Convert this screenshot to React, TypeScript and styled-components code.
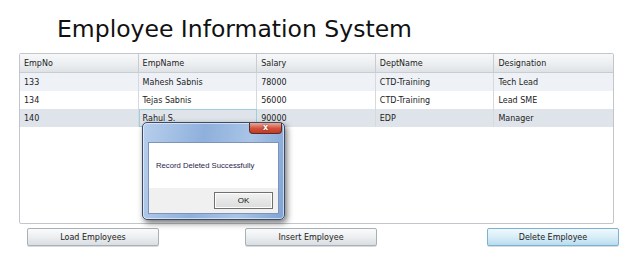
import React from "react";
import styled, { createGlobalStyle, css } from "styled-components";

const GlobalStyle = createGlobalStyle`
  html, body {
    margin: 0;
    padding: 0;
    background: #ffffff;
  }
  body {
    font-family: "DejaVu Sans", Verdana, sans-serif;
    color: #1a1a1a;
  }
`;

interface Employee {
  empNo: number;
  name: string;
  salary: number;
  dept: string;
  designation: string;
}

const employees: Employee[] = [
  { empNo: 133, name: "Mahesh Sabnis", salary: 78000, dept: "CTD-Training", designation: "Tech Lead" },
  { empNo: 134, name: "Tejas Sabnis", salary: 56000, dept: "CTD-Training", designation: "Lead SME" },
  { empNo: 140, name: "Rahul S.", salary: 90000, dept: "EDP", designation: "Manager" },
];

const columns = ["EmpNo", "EmpName", "Salary", "DeptName", "Designation"];

export default function App() {
  return (
    <>
      <GlobalStyle />
      <Page>
        <Title>Employee Information System</Title>
        <Grid>
          <HeaderRow>
            {columns.map((c) => (
              <HeaderCell key={c}>{c}</HeaderCell>
            ))}
          </HeaderRow>
          {employees.map((e, i) => (
            <Row key={e.empNo} tone={i === 0 ? "alt" : i === 2 ? "selected" : "plain"}>
              <Cell>{e.empNo}</Cell>
              <Cell focused={i === 2}>{e.name}</Cell>
              <Cell>{e.salary}</Cell>
              <Cell>{e.dept}</Cell>
              <Cell>{e.designation}</Cell>
            </Row>
          ))}
        </Grid>
        <Toolbar>
          <Button>Load Employees</Button>
          <Button offset={86}>Insert Employee</Button>
          <Button offset={110} active>
            Delete Employee
          </Button>
        </Toolbar>

        <Dialog>
          <TitleBar>
            <CloseButton>x</CloseButton>
          </TitleBar>
          <DialogBody>
            <Message>Record Deleted Successfully</Message>
            <DialogFooter>
              <OkButton>OK</OkButton>
            </DialogFooter>
          </DialogBody>
        </Dialog>
      </Page>
    </>
  );
}

const Page = styled.div`
  position: relative;
  width: 628px;
  height: 259px;
  overflow: hidden;
`;

const Title = styled.h1`
  margin: 0;
  padding: 15px 0 0 57px;
  font-size: 23.5px;
  line-height: 28px;
  font-weight: normal;
  color: #111;
`;

const Grid = styled.div`
  margin: 10px 0 0 19px;
  width: 593px;
  height: 169px;
  border: 1px solid #c2c6cb;
  border-radius: 2px;
  box-sizing: content-box;
  font-size: 8px;
`;

const HeaderRow = styled.div`
  display: grid;
  grid-template-columns: repeat(5, 1fr);
  height: 18px;
  background: linear-gradient(#f7f8f9, #eceef0 55%, #dfe2e5);
  border-bottom: 1px solid #c9cdd2;
`;

const HeaderCell = styled.div`
  display: flex;
  align-items: center;
  padding-left: 4px;
  border-right: 1px solid #c9cdd2;
  color: #222;

  &:last-child {
    border-right: none;
  }
`;

const rowTones = {
  alt: "#eef2f6",
  plain: "#ffffff",
  selected: "#dfe4ea",
};

const Row = styled.div<{ tone: keyof typeof rowTones }>`
  display: grid;
  grid-template-columns: repeat(5, 1fr);
  height: 18px;
  background: ${({ tone }) => rowTones[tone]};
`;

const Cell = styled.div<{ focused?: boolean }>`
  display: flex;
  align-items: center;
  padding-left: 4px;
  border-right: 1px solid #d6dade;
  color: #222;
  box-sizing: border-box;

  &:last-child {
    border-right: none;
  }

  ${({ focused }) =>
    focused &&
    css`
      border: 1px solid #9dd0de;
      padding-left: 3px;
    `}
`;

const Toolbar = styled.div`
  display: flex;
  margin: 4px 0 0 27px;
`;

const Button = styled.button<{ active?: boolean; offset?: number }>`
  width: 132px;
  height: 18px;
  margin-left: ${({ offset }) => offset ?? 0}px;
  padding: 0;
  font-family: "DejaVu Sans", Verdana, sans-serif;
  font-size: 8px;
  color: #222;
  border: 1px solid #a8b0b8;
  border-radius: 2px;
  background: linear-gradient(#fafbfc, #eceef0 50%, #dadee2);
  box-shadow: 0 1px 0 #d8dbde;

  ${({ active }) =>
    active &&
    css`
      border-color: #78b4d0;
      background: linear-gradient(#f0f8fd, #d8edf8 50%, #b9dcef);
    `}
`;

const Dialog = styled.div`
  position: absolute;
  left: 142px;
  top: 122px;
  width: 143px;
  height: 98px;
  box-sizing: border-box;
  border: 1px solid #3a4a66;
  border-radius: 5px;
  padding: 0 5px 5px;
  display: flex;
  flex-direction: column;
  background: linear-gradient(100deg, #b8cfec, #8fb0dc 40%, #a9c4e6 70%, #7fa3d4);
  box-shadow: 2px 3px 6px rgba(0, 0, 0, 0.55), inset 0 0 0 1px rgba(255, 255, 255, 0.55);
`;

const TitleBar = styled.div`
  height: 19px;
  display: flex;
  justify-content: flex-end;
  align-items: flex-start;
`;

const CloseButton = styled.div`
  width: 33px;
  height: 11px;
  margin-right: -3px;
  box-sizing: border-box;
  border: 1px solid #5a2a24;
  border-top: none;
  border-radius: 0 0 4px 4px;
  background: linear-gradient(#e9a99a, #d0503a 55%, #c43a26);
  color: #fff;
  font-family: "DejaVu Sans", sans-serif;
  font-weight: bold;
  font-size: 8px;
  line-height: 9px;
  text-align: center;
  text-shadow: 0 0 2px #6a1a10;
`;

const DialogBody = styled.div`
  flex: 1;
  display: flex;
  flex-direction: column;
  border: 1px solid #7d94b8;
  background: #f0f0f0;
`;

const Message = styled.div`
  height: 45px;
  background: #ffffff;
  display: flex;
  align-items: center;
  padding-left: 7px;
  font-family: "Liberation Sans", Arial, sans-serif;
  font-size: 7.7px;
  color: #1e1e4a;
`;

const DialogFooter = styled.div`
  flex: 1;
  display: flex;
  justify-content: flex-end;
  align-items: center;
  padding-right: 5px;
`;

const OkButton = styled.div`
  width: 59px;
  height: 17px;
  box-sizing: border-box;
  border: 1px solid #707070;
  box-shadow: inset 0 0 0 1px #fdfdfd;
  background: linear-gradient(#f2f2f2, #e6e6e6 50%, #dcdcdc);
  display: flex;
  align-items: center;
  justify-content: center;
  font-family: "Liberation Sans", Arial, sans-serif;
  font-size: 8px;
  color: #111;
`;
